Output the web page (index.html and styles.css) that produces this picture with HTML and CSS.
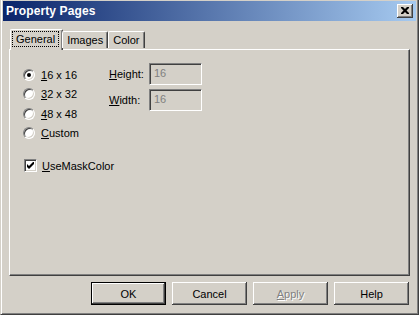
FILE: index.html
```html
<!DOCTYPE html>
<html lang="en">
<head>
    <meta charset="UTF-8">
    <title>Property Pages</title>
    <link rel="stylesheet" href="styles.css">
</head>
<body>
    <div class="window">
        <div class="titlebar">
            <span class="title">Property Pages</span>
            <button class="close-btn">
                <svg width="8" height="7" viewBox="0 0 8 7"><path d="M0 0h2l2 2 2-2h2v1L5.5 3.5 8 6v1H6L4 5 2 7H0V6l2.5-2.5L0 1z" fill="#000"/></svg>
            </button>
        </div>

        <div class="dialog-body">
            <div class="tabs">
                <div class="tab active"><span class="focus">General</span></div>
                <div class="tab">Images</div>
                <div class="tab">Color</div>
            </div>

            <div class="panel">
                <div class="panel-top">
                    <div class="radios">
                        <label class="radio-row"><span class="radio checked"></span><span><u>1</u>6 x 16</span></label>
                        <label class="radio-row"><span class="radio"></span><span><u>3</u>2 x 32</span></label>
                        <label class="radio-row"><span class="radio"></span><span><u>4</u>8 x 48</span></label>
                        <label class="radio-row"><span class="radio"></span><span><u>C</u>ustom</span></label>
                    </div>
                    <div class="fields">
                        <div class="field-row">
                            <span class="field-label"><u>H</u>eight:</span>
                            <span class="textbox">16</span>
                        </div>
                        <div class="field-row">
                            <span class="field-label"><u>W</u>idth:</span>
                            <span class="textbox">16</span>
                        </div>
                    </div>
                </div>

                <label class="check-row">
                    <span class="checkbox">
                        <svg width="7" height="7" viewBox="0 0 7 7"><path d="M0 2v3l2 2 5-5V-1L2 4z" fill="#000"/></svg>
                    </span>
                    <span><u>U</u>seMaskColor</span>
                </label>
            </div>

            <div class="buttons">
                <button class="btn default">OK</button>
                <button class="btn">Cancel</button>
                <button class="btn disabled"><u>A</u>pply</button>
                <button class="btn">Help</button>
            </div>
        </div>
    </div>
</body>
</html>
```

FILE: styles.css
```css
* {
    box-sizing: border-box;
    margin: 0;
    padding: 0;
}

body {
    margin: 0;
    background: #D4D0C8;
    font-family: 'Liberation Sans', Arial, sans-serif;
    font-size: 11px;
    color: #000;
}

u {
    text-decoration: underline;
    text-underline-offset: 1px;
}

.window {
    width: 419px;
    height: 315px;
    background: #D4D0C8;
    border-left: 1px solid #D4D0C8;
    border-right: 1px solid #404040;
    border-bottom: 1px solid #404040;
    box-shadow: inset 1px 0 #fff, inset -1px -1px #808080;
    padding: 1px 2px 2px 2px;
}

.titlebar {
    height: 20px;
    display: flex;
    align-items: center;
    justify-content: space-between;
    background: linear-gradient(to right, #0A246A, #A6CAF0);
    padding: 0 3px 0 3px;
}

.title {
    color: #fff;
    font-weight: bold;
    font-size: 12px;
    letter-spacing: 0.1px;
}

.close-btn {
    width: 16px;
    height: 14px;
    background: #D4D0C8;
    border: none;
    box-shadow: inset -1px -1px #404040, inset 1px 1px #fff, inset -2px -2px #808080;
    display: flex;
    align-items: center;
    justify-content: center;
    padding-bottom: 1px;
}

.dialog-body {
    padding: 8px 6px 0 6px;
}

/* tabs */
.tabs {
    display: flex;
    align-items: flex-end;
    height: 20px;
    padding-left: 1px;
    position: relative;
    z-index: 1;
}

.tab {
    height: 17px;
    padding: 2px 4px 0 4px;
    border-top: 1px solid #fff;
    border-left: 1px solid #fff;
    border-right: 1px solid #404040;
    box-shadow: inset -1px 0 #808080;
    border-radius: 2px 2px 0 0;
    margin-bottom: 1px;
}

.tab.active {
    height: 21px;
    margin: 0 -1px -1px 0;
    padding: 2px 4px 0 2px;
    background: #D4D0C8;
}

.focus {
    display: inline-block;
    outline: 1px dotted #000;
    padding: 0 3px;
    line-height: 14px;
}

.panel {
    height: 227px;
    border-top: 1px solid #fff;
    border-left: 1px solid #fff;
    border-right: 1px solid #404040;
    border-bottom: 1px solid #404040;
    box-shadow: inset -1px -1px #808080;
    padding: 13px 0 0 13px;
}

.panel-top {
    display: flex;
}

.radios {
    display: flex;
    flex-direction: column;
    width: 86px;
    padding-top: 2px;
}

.radio-row {
    display: flex;
    align-items: center;
    gap: 6px;
    height: 19.5px;
}

.radio {
    width: 12px;
    height: 12px;
    border-radius: 50%;
    background: #fff;
    border-top: 1px solid #808080;
    border-left: 1px solid #808080;
    border-right: 1px solid #fff;
    border-bottom: 1px solid #fff;
    box-shadow: inset 1px 1px #404040, inset -1px -1px #D4D0C8;
    display: flex;
    align-items: center;
    justify-content: center;
}

.radio.checked::after {
    content: '';
    width: 4px;
    height: 4px;
    border-radius: 50%;
    background: #000;
}

.fields {
    display: flex;
    flex-direction: column;
    gap: 4px;
}

.field-row {
    display: flex;
    align-items: center;
}

.field-label {
    width: 40px;
}

.textbox {
    width: 53px;
    height: 22px;
    background: #D4D0C8;
    color: #808080;
    border-top: 1px solid #808080;
    border-left: 1px solid #808080;
    border-right: 1px solid #fff;
    border-bottom: 1px solid #fff;
    box-shadow: inset 1px 1px #404040, inset -1px -1px #D4D0C8;
    padding: 3px 0 0 4px;
}

.check-row {
    display: flex;
    align-items: center;
    gap: 5px;
    margin-top: 16px;
    padding-left: 1px;
}

.checkbox {
    width: 13px;
    height: 13px;
    background: #fff;
    border-top: 1px solid #808080;
    border-left: 1px solid #808080;
    border-right: 1px solid #fff;
    border-bottom: 1px solid #fff;
    box-shadow: inset 1px 1px #404040, inset -1px -1px #D4D0C8;
    display: flex;
    align-items: center;
    justify-content: center;
}

/* bottom buttons */
.buttons {
    display: flex;
    justify-content: flex-end;
    gap: 6px;
    margin-top: 6px;
    padding-right: 1px;
}

.btn {
    width: 75px;
    height: 23px;
    background: #D4D0C8;
    font-family: 'Liberation Sans', Arial, sans-serif;
    font-size: 11px;
    color: #000;
    border: none;
    box-shadow: inset -1px -1px #404040, inset 1px 1px #fff, inset -2px -2px #808080;
}

.btn.default {
    box-shadow: inset 0 0 0 1px #000, inset -2px -2px #404040, inset 2px 2px #fff, inset -3px -3px #808080;
}

.btn.disabled {
    color: #808080;
    text-shadow: 1px 1px #fff;
}
```
